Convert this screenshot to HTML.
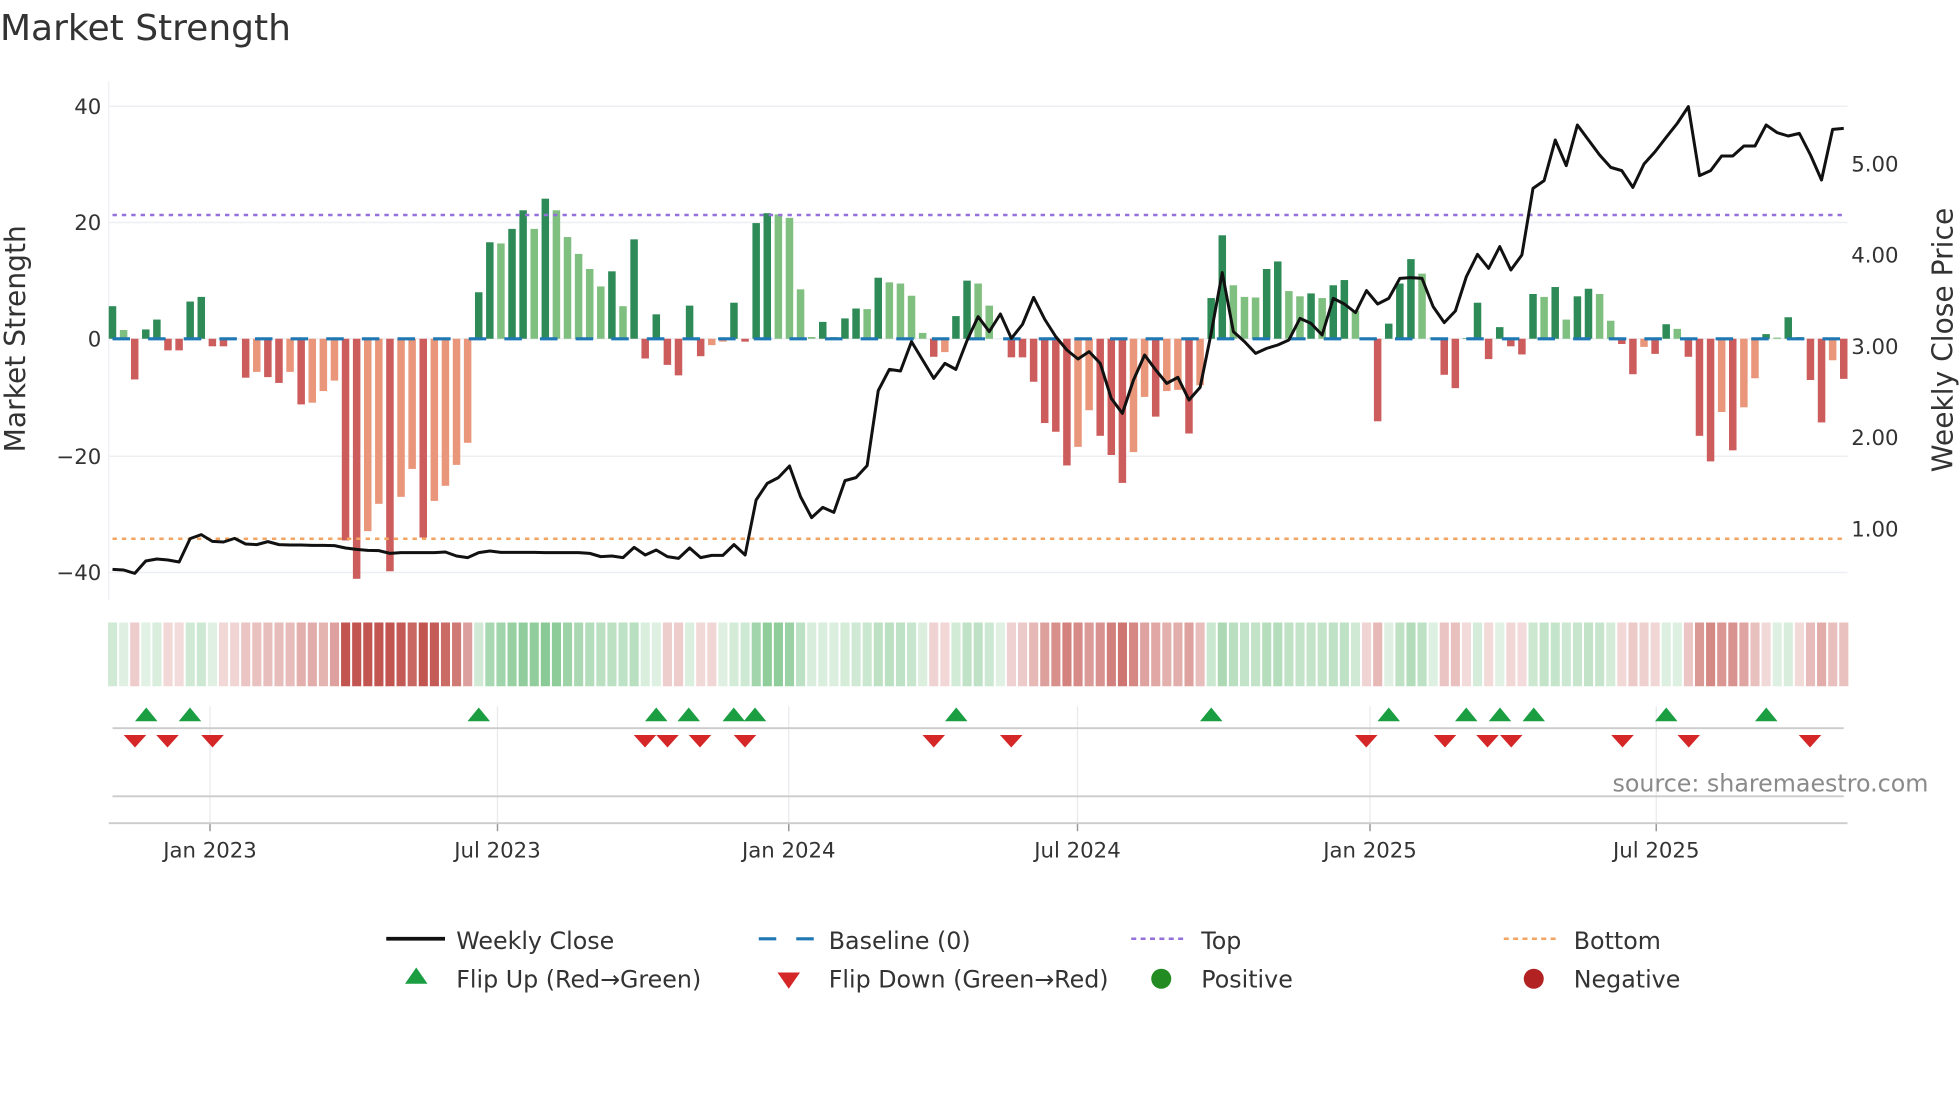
<!DOCTYPE html>
<html><head><meta charset="utf-8"><style>
html,body{margin:0;padding:0;background:#fff;}
svg{display:block;font-family:"DejaVu Sans","Liberation Sans",sans-serif;}
</style></head><body>
<svg id="s" width="1960" height="1102" viewBox="0 0 1568 881.6" xmlns="http://www.w3.org/2000/svg">
<rect width="1568" height="881.6" fill="#fff"/>
<text x="0" y="32" font-size="28.8" fill="#333">Market Strength</text>
<g id="grid"></g>
<g id="bars"></g>
<g id="over"></g>
<g id="strip"></g>
<g id="low"></g>
<g id="leg"></g>
</svg>
<script>
var NS="http://www.w3.org/2000/svg";
function el(p,t,a,txt){var e=document.createElementNS(NS,t);for(var k in a)e.setAttribute(k,a[k]);if(txt!==undefined)e.textContent=txt;document.getElementById(p).appendChild(e);return e;}
var V=[5.6,1.5,-7,1.6,3.3,-2,-2,6.4,7.2,-1.3,-1.3,0,-6.7,-5.7,-6.6,-7.6,-5.7,-11.3,-11,-9,-7.2,-34.7,-41.3,-33.1,-28.4,-40,-27.2,-22.4,-34.2,-27.9,-25.3,-21.7,-17.9,8,16.6,16.4,18.9,22.1,18.9,24.1,
22.1,17.5,14.6,12,9,11.6,5.6,17.1,-3.4,4.2,-4.5,-6.3,5.7,-3,-1.1,-0.5,6.2,-0.5,19.9,21.6,21.4,20.8,8.5,0.3,2.9,0.3,3.5,5.2,5.1,10.5,9.7,9.5,7.4,1,-3.1,-2.3,3.9,10,9.5,
5.7,0,-3.2,-3.2,-7.4,-14.5,-16,-21.8,-18.6,-12.3,-16.7,-20,-24.8,-19.5,-10,-13.4,-9,-8.8,-16.3,-8,7,17.8,9.2,7.2,7.1,12,13.3,8.2,7.3,7.8,7,9.2,10.1,4.8,0,-14.2,2.6,9.5,13.7,
11.2,0.2,-6.2,-8.5,0.1,6.2,-3.5,2,-1.3,-2.7,7.7,7.2,8.9,3.3,7.3,8.6,7.7,3.1,-0.9,-6.1,-1.4,-2.6,2.5,1.7,-3.1,-16.7,-21.1,-12.6,-19.2,-11.8,-6.8,0.8,0.2,3.7,0.3,-7.1,-14.4,-3.7,-6.9];
var P=[1168,1170,1180,1143,1137,1140,1146,1076,1064,1084,1086,1075,1092,1094,1085,1094,1095,1095,1096,1096,1097,1104,1108,1111,1112,1120,1118,1118,1118,1118,1116,1128,1133,1118,1113,1117,1117,1117,1117,1118,
1118,1118,1118,1120,1130,1128,1133,1102,1125,1110,1130,1135,1104,1133,1126,1126,1094,1125,960,910,893,858,950,1013,982,997,902,893,857,632,568,573,485,540,595,550,568,482,410,
455,402,475,433,352,418,470,510,537,515,550,655,700,600,525,570,610,592,660,622,460,278,455,485,520,505,495,480,415,430,465,355,372,398,332,372,355,295,293];
var P7=[593,595,680,728,693,590,523,565,500,570,525,325,302,180,257,135,180,225,262,272,322,252,215,172,130,80,287,272,228,228,198,198,135,158,168,160,225,300,148,145];
var N=V.length, x0=90, dx=(1475-90)/(N-1);
function X(i){return x0+i*dx;}
function colr(i){var v=V[i];
 if(v>=0){return (i>0&&V[i]<V[i-1]&&V[i-1]>0)?"#7fbf7f":"#2e8b57";}
 return (i>0&&V[i]>V[i-1]&&V[i-1]<0)?"#e9967a":"#cd5c5c";}
[85,178,271,365,458].forEach(function(y){el("grid","line",{x1:87,x2:1478,y1:y,y2:y,stroke:"#eeeff2","stroke-width":1.2});});
el("grid","line",{x1:87,x2:87,y1:65,y2:480,stroke:"#eeeff2","stroke-width":1});
[["40",85],["20",178],["0",271],["\u221220",365],["\u221240",458]].forEach(function(a){el("grid","text",{x:81,y:a[1]+6,"font-size":17,fill:"#333","text-anchor":"end"},a[0]);});
[["5.00",131],["4.00",204],["3.00",277],["2.00",350],["1.00",423]].forEach(function(a){el("grid","text",{x:1481,y:a[1]+6,"font-size":17,fill:"#333"},a[0]);});
el("grid","text",{x:0,y:0,"font-size":22.5,fill:"#333","text-anchor":"middle",transform:"translate(20,271) rotate(-90)"},"Market Strength");
el("grid","text",{x:0,y:0,"font-size":22.5,fill:"#333","text-anchor":"middle",transform:"translate(1562,272) rotate(-90)"},"Weekly Close Price");
for(var i=0;i<N;i++){var v=V[i];if(Math.abs(v)<0.05)continue;var h=Math.abs(v)*4.65;var c=colr(i);
 el("bars","rect",{x:X(i)-3,y:v>0?271-h:271,width:6,height:h,fill:c});}
el("over","line",{x1:90,x2:1475,y1:172,y2:172,stroke:"#9370db","stroke-width":2,"stroke-dasharray":"3.5 4"});
el("over","line",{x1:90,x2:1475,y1:431,y2:431,stroke:"#f4a460","stroke-width":2,"stroke-dasharray":"3.5 4"});
el("over","line",{x1:90,x2:1475,y1:271,y2:271,stroke:"#1f77b4","stroke-width":2.5,"stroke-dasharray":"14 14.5"});
var pts=[];for(var i=0;i<=117;i++){pts.push(X(i).toFixed(1)+","+((180+P[i]/3)/1.25).toFixed(1));}
for(var j=1;j<P7.length;j++){var i=117+j;pts.push(X(i).toFixed(1)+","+((80+P7[j]/3)/1.25).toFixed(1));}
el("over","polyline",{points:pts.join(" "),fill:"none",stroke:"#111","stroke-width":2.4,"stroke-linejoin":"round"});
function sm(i){var a=0,n=0;for(var k=i-1;k<=i+1;k++){if(k>=0&&k<N){a+=V[k];n++;}}return (V[i]*2+a)/(n+2);}
for(var i=0;i<N;i++){var v=sm(i);var t=Math.min(Math.abs(v)/30,1);t=0.2+0.8*t;var r,g,b;
 if(v>=0){r=255+(110-255)*t;g=255+(190-255)*t;b=255+(125-255)*t;}else{r=255+(195-255)*t;g=255+(85-255)*t;b=255+(80-255)*t;}
 el("strip","rect",{x:X(i)-4.4+0.8,y:498,width:dx-1.6,height:51,fill:"rgb("+(r|0)+","+(g|0)+","+(b|0)+")"});}
var mx=[[168,"Jan 2023"],[398,"Jul 2023"],[631,"Jan 2024"],[862,"Jul 2024"],[1096,"Jan 2025"],[1325,"Jul 2025"]];
mx.forEach(function(m){el("low","line",{x1:m[0],x2:m[0],y1:565,y2:658,stroke:"#e8eaee","stroke-width":1});
 el("low","line",{x1:m[0],x2:m[0],y1:658,y2:665,stroke:"#999","stroke-width":1.2});
 el("low","text",{x:m[0],y:686,"font-size":17,fill:"#333","text-anchor":"middle"},m[1]);});
el("low","line",{x1:90,x2:1475,y1:582.5,y2:582.5,stroke:"#ccc","stroke-width":1.5});
el("low","line",{x1:90,x2:1475,y1:637,y2:637,stroke:"#ccc","stroke-width":1.5});
el("low","line",{x1:87,x2:1478,y1:658.5,y2:658.5,stroke:"#ccc","stroke-width":1.5});
[117,152,383,525,551,587,604,765,969,1111,1173,1200,1227,1333,1413].forEach(function(x){el("low","polygon",{points:(x-9)+",577 "+(x+9)+",577 "+x+",566",fill:"#1a9e41"});});
[108,134,170,516,534,560,596,747,809,1093,1156,1190,1209,1298,1351,1448].forEach(function(x){el("low","polygon",{points:(x-9)+",588 "+(x+9)+",588 "+x+",598",fill:"#d62728"});});
el("low","text",{x:1290,y:633,"font-size":19,fill:"#8a8a8a"},"source: sharemaestro.com");
el("leg","line",{x1:309,x2:356,y1:751,y2:751,stroke:"#111","stroke-width":3});
el("leg","text",{x:365,y:759,"font-size":19,fill:"#333"},"Weekly Close");
el("leg","line",{x1:607,x2:651,y1:751,y2:751,stroke:"#1f77b4","stroke-width":2.5,"stroke-dasharray":"14 16"});
el("leg","text",{x:663,y:759,"font-size":19,fill:"#333"},"Baseline (0)");
el("leg","line",{x1:905,x2:949,y1:751,y2:751,stroke:"#9370db","stroke-width":2,"stroke-dasharray":"4 3.5"});
el("leg","text",{x:961,y:759,"font-size":19,fill:"#333"},"Top");
el("leg","line",{x1:1203,x2:1247,y1:751,y2:751,stroke:"#f4a460","stroke-width":2,"stroke-dasharray":"4 3.5"});
el("leg","text",{x:1259,y:759,"font-size":19,fill:"#333"},"Bottom");
el("leg","polygon",{points:"324,787 342,787 333,774",fill:"#1a9e41"});
el("leg","text",{x:365,y:790,"font-size":19,fill:"#333"},"Flip Up (Red\u2192Green)");
el("leg","polygon",{points:"622,778 640,778 631,791",fill:"#d62728"});
el("leg","text",{x:663,y:790,"font-size":19,fill:"#333"},"Flip Down (Green\u2192Red)");
el("leg","circle",{cx:929,cy:783,r:8,fill:"#228b22"});
el("leg","text",{x:961,y:790,"font-size":19,fill:"#333"},"Positive");
el("leg","circle",{cx:1227,cy:783,r:8,fill:"#b22222"});
el("leg","text",{x:1259,y:790,"font-size":19,fill:"#333"},"Negative");
</script>
</body></html>
